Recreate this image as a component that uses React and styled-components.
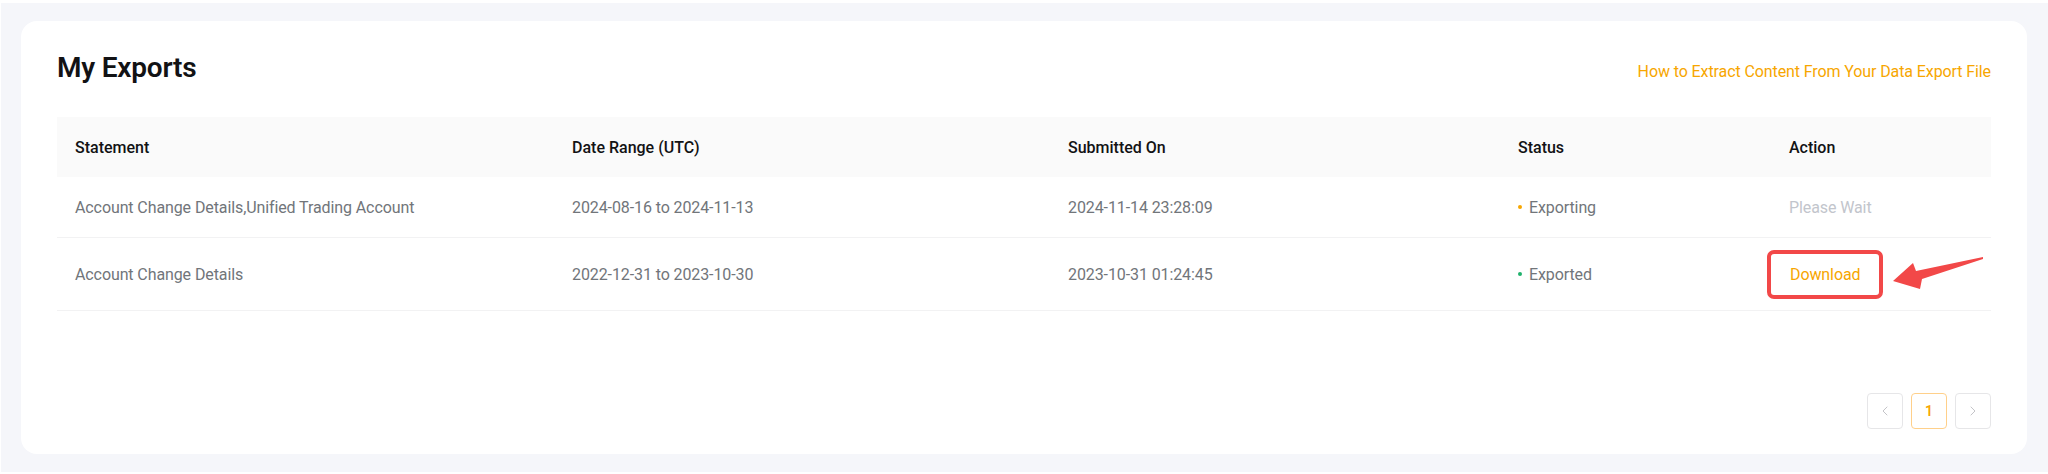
import React from 'react'
import styled, { createGlobalStyle } from 'styled-components'
import { ChevronLeft, ChevronRight } from 'lucide-react'

const GlobalStyle = createGlobalStyle`
  * { box-sizing: border-box; }
  body {
    margin: 0;
    background: #ffffff;
    font-family: Roboto, "Liberation Sans", Arial, sans-serif;
  }
`

const Page = styled.div`
  margin: 3px 0 2px 1px;
  height: 469px;
  padding: 18px 21px 18px 20px;
  background: #f5f6fa;
`

const Card = styled.div`
  height: 433px;
  display: flex;
  flex-direction: column;
  padding: 30px 36px 25px;
  background: #ffffff;
  border-radius: 16px;
`

const TitleRow = styled.div`
  display: flex;
  align-items: baseline;
  justify-content: space-between;
  line-height: 34px;
`

const Title = styled.h2`
  margin: 0;
  font-size: 28px;
  font-weight: 600;
  color: #121214;
  letter-spacing: -0.2px;
`

const HelpLink = styled.a`
  font-size: 16px;
  letter-spacing: -0.1px;
  color: #f7a600;
  text-decoration: none;
  cursor: pointer;
`

const Table = styled.div`
  margin-top: 28px;
`

const Grid = styled.div`
  display: grid;
  grid-template-columns: 497px 496px 450px 271px 1fr;
  align-items: center;
`

const HeadRow = styled(Grid)`
  height: 60px;
  background: #fafafa;
`

const Row = styled(Grid)`
  min-height: ${(p) => p.h}px;
  border-bottom: 1px solid #f2f2f3;
`

const HeadCell = styled.div`
  padding-left: 18px;
  font-size: 16px;
  font-weight: 500;
  color: #121214;
`

const Cell = styled.div`
  position: relative;
  padding-left: 18px;
  font-size: 16px;
  letter-spacing: -0.1px;
  color: #71757a;
  display: flex;
  align-items: center;
`

const Dot = styled.span`
  width: 4px;
  height: 4px;
  border-radius: 50%;
  margin-right: 7px;
  background: ${(p) => p.color};
`

const Muted = styled.span`
  color: #c2c5cc;
`

const DownloadBox = styled.span`
  margin-left: -22px;
  height: 49px;
  display: inline-flex;
  align-items: center;
  padding: 0 19px;
  border: 4px solid #f24848;
  border-radius: 7px;
  color: #f7a600;
  font-size: 16px;
`

const Arrow = styled.svg`
  position: absolute;
  left: 118px;
  top: 0px;
`

const Pager = styled.div`
  margin-top: auto;
  display: flex;
  justify-content: flex-end;
  gap: 8px;
`

const PageBtn = styled.div`
  width: 36px;
  height: 36px;
  display: flex;
  align-items: center;
  justify-content: center;
  border: 1.5px solid ${(p) => (p.active ? '#ffd08a' : '#e6e6e8')};
  border-radius: 4px;
  color: ${(p) => (p.active ? '#f7a600' : '#c4c4c8')};
  font-size: 14px;
  font-weight: 600;
`

const rows = [
  {
    statement: 'Account Change Details,Unified Trading Account',
    range: '2024-08-16 to 2024-11-13',
    submitted: '2024-11-14 23:28:09',
    status: 'Exporting',
    dot: '#f7a600',
    h: 61,
  },
  {
    statement: 'Account Change Details',
    range: '2022-12-31 to 2023-10-30',
    submitted: '2023-10-31 01:24:45',
    status: 'Exported',
    dot: '#20b26c',
    h: 73,
  },
]

export default function App() {
  return (
    <>
      <GlobalStyle />
      <Page>
        <Card>
          <TitleRow>
            <Title>My Exports</Title>
            <HelpLink>How to Extract Content From Your Data Export File</HelpLink>
          </TitleRow>
          <Table>
            <HeadRow>
              <HeadCell>Statement</HeadCell>
              <HeadCell>Date Range (UTC)</HeadCell>
              <HeadCell>Submitted On</HeadCell>
              <HeadCell>Status</HeadCell>
              <HeadCell>Action</HeadCell>
            </HeadRow>
            {rows.map((r) => (
              <Row key={r.submitted} h={r.h}>
                <Cell>{r.statement}</Cell>
                <Cell>{r.range}</Cell>
                <Cell>{r.submitted}</Cell>
                <Cell>
                  <Dot color={r.dot} />
                  {r.status}
                </Cell>
                <Cell>
                  {r.status === 'Exported' ? (
                    <>
                      <DownloadBox>Download</DownloadBox>
                      <Arrow width="100" height="44" viewBox="0 0 100 44">
                        <polygon
                          points="4,31 24,13 27,21 94,7 94,9 33,29 31,39"
                          fill="#f24848"
                        />
                      </Arrow>
                    </>
                  ) : (
                    <Muted>Please Wait</Muted>
                  )}
                </Cell>
              </Row>
            ))}
          </Table>
          <Pager>
            <PageBtn><ChevronLeft size={16} strokeWidth={1.5} /></PageBtn>
            <PageBtn active>1</PageBtn>
            <PageBtn><ChevronRight size={16} strokeWidth={1.5} /></PageBtn>
          </Pager>
        </Card>
      </Page>
    </>
  )
}
